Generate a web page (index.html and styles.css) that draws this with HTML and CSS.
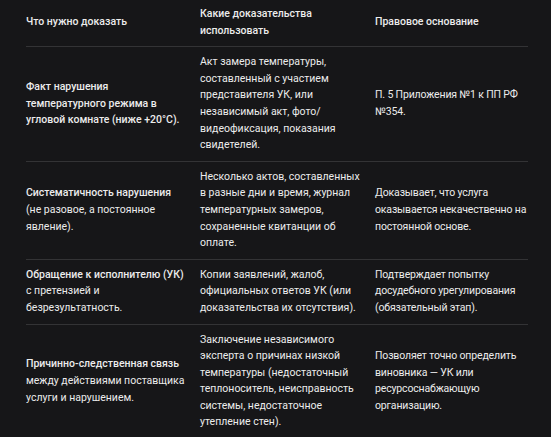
FILE: index.html
```html
<!DOCTYPE html>
<html lang="ru">
<head>
<meta charset="utf-8">
<link rel="stylesheet" href="styles.css">
</head>
<body>
<div class="wrap">
<table class="evidence">
<colgroup><col class="c1"><col class="c2"><col class="c3"></colgroup>
<thead>
<tr><th>Что нужно доказать</th><th>Какие доказательства использовать</th><th>Правовое основание</th></tr>
</thead>
<tbody>
<tr>
<td class="lead">Факт нарушения температурного режима в угловой комнате (ниже +20°C).</td>
<td>Акт замера температуры, составленный с участием представителя УК, или независимый акт, фото/видеофиксация, показания свидетелей.</td>
<td class="basis">П. 5 Приложения №1 к ПП РФ №354.</td>
</tr>
<tr>
<td class="lead">Систематичность нарушения <span class="norm">(не разовое, а постоянное явление).</span></td>
<td>Несколько актов, составленных в разные дни и время, журнал температурных замеров, сохраненные квитанции об оплате.</td>
<td class="basis">Доказывает, что услуга оказывается некачественно на постоянной основе.</td>
</tr>
<tr>
<td class="lead">Обращение к исполнителю (УК) <span class="norm">с претензией и безрезультатность.</span></td>
<td>Копии заявлений, жалоб, официальных ответов УК (или доказательства их отсутствия).</td>
<td class="basis">Подтверждает попытку досудебного урегулирования (обязательный этап).</td>
</tr>
<tr>
<td class="lead">Причинно-следственная связь <span class="norm">между действиями поставщика услуги и нарушением.</span></td>
<td>Заключение независимого эксперта о причинах низкой температуры (недостаточный теплоноситель, неисправность системы, недостаточное утепление стен).</td>
<td class="basis">Позволяет точно определить виновника — УК или ресурсоснабжающую организацию.</td>
</tr>
</tbody>
</table>
</div>
</body>
</html>
```
FILE: styles.css
```css
html, body {
  margin: 0;
  padding: 0;
  background: #161618;
}
.wrap {
  padding: 0 23px 0 26px;
  margin-top: -1px;
}
.evidence {
  width: 502px;
  border-collapse: collapse;
  table-layout: fixed;
  font-family: Roboto, "Noto Sans", sans-serif;
  font-size: 10.5px;
  line-height: 16.6px;
  color: #ececec;
}
.c1 { width: 174px; }
.c2 { width: 175px; }
.c3 { width: 153px; }
.evidence th,
.evidence td {
  text-align: left;
  vertical-align: middle;
  padding: 7px 14px 7px 0;
  border-bottom: 1px solid #333335;
}
.evidence th:last-child,
.evidence td:last-child {
  padding-right: 0;
}
.evidence td.basis {
  letter-spacing: -0.15px;
}
.evidence th {
  font-weight: 500;
}
.evidence td.lead {
  font-weight: 500;
}
.norm {
  font-weight: 400;
}
```
